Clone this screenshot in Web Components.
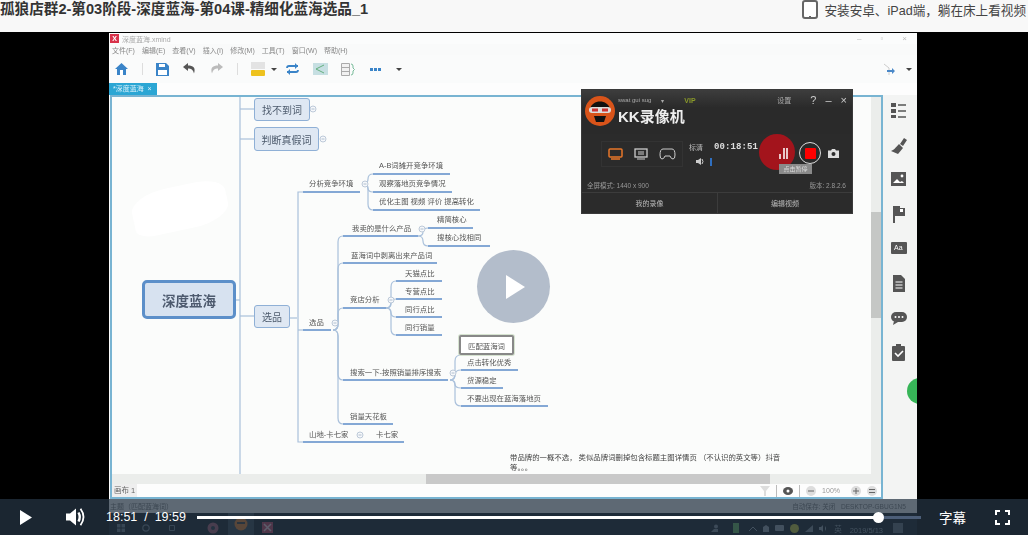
<!DOCTYPE html>
<html lang="zh">
<head>
<meta charset="utf-8">
<title>深度蓝海</title>
<style>
html, body { margin: 0; height: 100%; overflow: hidden; background: #000; }
body { font-family: "Liberation Sans", "Noto Sans CJK SC", sans-serif; }
</style>
</head>
<body>
<lesson-page>
  <lesson-header slot="header" title="孤狼店群2-第03阶段-深度蓝海-第04课-精细化蓝海选品_1" promo="安装安卓、iPad端，躺在床上看视频"></lesson-header>
  <video-player>
    <xmind-window>
      <mind-map></mind-map>
      <kk-recorder slot="overlay"></kk-recorder>
    </xmind-window>
    <player-controls slot="controls" current="18:51" total="19:59"></player-controls>
  </video-player>
</lesson-page>

<script>
const CJK = `"Liberation Sans", "Noto Sans CJK SC", sans-serif`;

// Page shell
class LessonPage extends HTMLElement {
  constructor() {
    super();
    this.attachShadow({ mode: "open" }).innerHTML = `
      <style>
      :host { display: flex; flex-direction: column; width: 1028px; height: 535px; overflow: hidden; }
      </style>
      <slot name="header"></slot>
      <slot></slot>`;
  }
}

// Top strip with course title and app promo
class LessonHeader extends HTMLElement {
  constructor() {
    super();
    this.attachShadow({ mode: "open" }).innerHTML = `
      <style>
      :host { display: flex; justify-content: space-between; height: 32px; flex: none; background: #f8f8f8; font-family: ${CJK}; }
      h1 { margin: -1px 0 0; font-size: 14.6px; line-height: 20px; font-weight: 700; color: #333; white-space: nowrap; }
      div { display: flex; align-items: center; gap: 6px; height: 19px; font-size: 12.6px; color: #444; padding-right: 2px; white-space: nowrap; }
      svg { display: block; }
      </style>
      <h1></h1>
      <div>
        <svg width="16" height="19" viewBox="0 0 16 19"><rect x="1" y="1" width="14" height="17" rx="2" fill="#fff" stroke="#666" stroke-width="2"/><rect x="7" y="16" width="2" height="1" fill="#666"/></svg>
        <span></span>
      </div>`;
  }
  connectedCallback() {
    this.shadowRoot.querySelector("h1").textContent = this.getAttribute("title");
    this.removeAttribute("title");
    this.shadowRoot.querySelector("span").textContent = this.getAttribute("promo");
  }
}

// Black stage holding the video frame, big play button and the control bar
class VideoPlayer extends HTMLElement {
  constructor() {
    super();
    this.attachShadow({ mode: "open" }).innerHTML = `
      <style>
      :host { display: block; position: relative; flex: 1; min-height: 0; background: #000; overflow: hidden; }
      .stage { box-sizing: border-box; height: 100%; padding: 1px 0 0 109px; }
      .play { position: absolute; left: 477px; top: 218px; width: 73px; height: 73px; border-radius: 50%; background: #b3bdcb; display: flex; align-items: center; justify-content: center; }
      .play svg { display: block; margin-left: 3px; }
      </style>
      <div class="stage"><slot></slot></div>
      <div class="play"><svg width="19" height="24" viewBox="0 0 19 24"><path d="M0 0L19 12L0 24Z" fill="#fff"/></svg></div>
      <slot name="controls"></slot>`;
  }
}

// Bottom control bar, translucent over the video
class PlayerControls extends HTMLElement {
  constructor() {
    super();
    this.attachShadow({ mode: "open" }).innerHTML = `
      <style>
      :host { position: absolute; left: 0; right: 0; bottom: 0; height: 36px; display: flex; align-items: center; background: rgba(38,53,68,.72); color: #fff; font-family: ${CJK}; font-size: 12.5px; }
      svg { display: block; flex: none; }
      .play { margin-left: 20px; }
      .vol { margin-left: 34px; }
      .time { margin-left: 21px; width: 91px; flex: none; white-space: pre; }
      .track { position: relative; width: 724px; height: 3px; background: #4c5e78; flex: none; }
      .done { width: 682px; height: 3px; background: #fff; }
      .knob { position: absolute; left: 676px; top: -4px; width: 11px; height: 11px; border-radius: 50%; background: #fff; }
      .cc { margin-left: 18px; width: 27px; flex: none; white-space: nowrap; font-size: 13.5px; }
      .full { margin-left: 29px; }
      </style>
      <svg class="play" width="12" height="15" viewBox="0 0 12 15"><path d="M0 0L12 7.5L0 15Z" fill="#fff"/></svg>
      <svg class="vol" width="19" height="18" viewBox="0 0 19 18"><path d="M0 5.5H4L10 .5V17.5L4 12.5H0Z" fill="#fff"/><path d="M12.5 4.5Q15 9 12.5 13.5" fill="none" stroke="#fff" stroke-width="2.4"/><path d="M14.5 .8Q20.5 9 14.5 17.2" fill="none" stroke="#fff" stroke-width="1.8"/></svg>
      <span class="time"></span>
      <div class="track"><div class="done"></div><div class="knob"></div></div>
      <span class="cc">字幕</span>
      <svg class="full" width="15" height="15" viewBox="0 0 15 15"><path d="M1 5V1H5M10 1H14V5M14 10V14H10M5 14H1V10" fill="none" stroke="#fff" stroke-width="2"/></svg>`;
  }
  connectedCallback() {
    this.shadowRoot.querySelector(".time").textContent = `${this.getAttribute("current")}  /  ${this.getAttribute("total")}`;
  }
}

// The recorded XMind desktop: chrome around a slotted map
class XmindWindow extends HTMLElement {
  constructor() {
    super();
    const side = [
      `<path d="M1 2h5v4H1zM1 8h5v4H1zM1 14h5v3H1z" fill="#555"/><path d="M8 4h8M8 10h8M8 16h8" stroke="#555" stroke-width="1.5"/>`,
      `<path d="M10 8l4-6 3 2-4 6zM9 8l4 4-5 6-7-3c3-1 4-3 8-7z" fill="#555"/>`,
      `<rect x="1" y="2" width="15" height="14" fill="#555"/><path d="M3 13l4-4 3 3 2-1 2 2z" fill="#fff"/><circle cx="12" cy="6" r="1.4" fill="#fff"/>`,
      `<path d="M3 1v17h2v-7h10V3h-5V1z" fill="#555"/><rect x="10" y="4" width="3" height="3" fill="#fff"/>`,
      `<rect x="1" y="3" width="16" height="12" rx="1" fill="#555"/><text x="4" y="11" font-size="7" fill="#fff" font-family="Liberation Sans">Aa</text>`,
      `<path d="M3 1h8l4 4v13H3z" fill="#555"/><path d="M5.5 8h7M5.5 11h7M5.5 14h7" stroke="#fff"/>`,
      `<rect x="1" y="4" width="16" height="10" rx="5" fill="#555"/><path d="M4 13l-1 4 5-3z" fill="#555"/><circle cx="5.5" cy="9" r="1" fill="#fff"/><circle cx="9" cy="9" r="1" fill="#fff"/><circle cx="12.5" cy="9" r="1" fill="#fff"/>`,
      `<rect x="2" y="3" width="13" height="15" rx="1" fill="#555"/><rect x="6" y="1" width="5" height="4" fill="#555"/><path d="M5 10l3 3 5-5" fill="none" stroke="#fff" stroke-width="1.6"/>`
    ].map(p => `<svg width="18" height="19" viewBox="0 0 18 19">${p}</svg>`).join("");
    const menu = ["文件(F)", "编辑(E)", "查看(V)", "插入(I)", "修改(M)", "工具(T)", "窗口(W)", "帮助(H)"]
      .map(m => `<span>${m}</span>`).join("");
    this.attachShadow({ mode: "open" }).innerHTML = `
      <style>
      :host { display: flex; position: relative; flex-direction: column; width: 808px; height: 502px; background: #fdfdfd; color: #777; font-family: ${CJK}; font-size: 7px; filter: blur(.65px); overflow: hidden; }
      svg { display: block; flex: none; }
      .title { flex: none; height: 11px; display: flex; align-items: center; padding-left: 1px; gap: 3px; color: #aaa; background: #fbfcfc; }
      .logo { width: 9px; height: 9px; background: #d8324a; color: #fff; line-height: 9px; text-align: center; font-size: 7px; font-weight: 700; }
      .winbtns { margin-left: auto; display: flex; gap: 19px; padding-right: 10px; color: #bbb; font-size: 8px; }
      .menu { flex: none; height: 11px; display: flex; align-items: center; gap: 7px; padding-left: 3px; color: #888; background: #f9fafa; }
      .tools { flex: none; height: 28px; display: flex; align-items: center; padding-left: 4px; background: #fafbfb; }
      .sep { width: 1px; height: 12px; background: #ddd; flex: none; }
      .caret { width: 0; height: 0; border: 3px solid transparent; border-top: 3px solid #444; border-bottom: 0; flex: none; }
      .tabbar { flex: none; height: 12px; background: #fdfdfd; }
      .tab { box-sizing: border-box; width: 48px; height: 12px; padding-left: 4px; background: #2ba6d4; color: #d8f0fa; line-height: 12px; white-space: nowrap; }
      .body { flex: 1; min-height: 0; height: 404px; display: flex; padding-left: 1px; }
      .frame { box-sizing: border-box; width: 773px; display: flex; flex-direction: column; border: 2px solid #78b4d2; background: #fff; }
      .area { flex: 1; min-height: 0; display: flex; }
      .area ::slotted(mind-map) { flex: 1; min-width: 0; }
      .vbar { flex: none; width: 10px; background: #ebedeb; position: relative; }
      .vthumb { margin-top: 115px; height: 106px; background: #c5c7c5; }
      .hbar { flex: none; height: 10px; background: #ebedeb; padding-left: 314px; }
      .hthumb { width: 344px; height: 10px; background: #c9c9c9; }
      .bottom { flex: none; height: 13px; display: flex; align-items: center; background: #fdfdfd; color: #666; }
      .sheet { padding: 0 2px; background: #eee; height: 13px; line-height: 13px; font-size: 7.5px; }
      .zoom { margin-left: auto; display: flex; align-items: center; gap: 6px; padding-right: 4px; color: #999; }
      .side { flex: 1; display: flex; flex-direction: column; align-items: center; gap: 15.5px; padding-top: 6px; padding-right: 2px; background: #f3f4f3; position: relative; overflow: hidden; }
      .green { position: absolute; left: 24px; top: 283px; width: 26px; height: 26px; border-radius: 50%; background: #37b558; }
      .status { flex: none; height: 14px; display: flex; justify-content: space-between; align-items: center; padding: 0 11px 0 1px; background: #f0f0f0; color: #777; }
      .status span:last-child { font-size: 6.6px; }
      .task { flex: none; height: 22px; display: flex; align-items: center; background: #0c1319; color: #8a96a0; position: relative; }
      .task svg { margin-top: 8px; }
      .tray { margin-left: auto; display: flex; align-items: center; gap: 6px; margin-top: 8px; }
      .tray svg { margin-top: 0; }
      .date { margin-left: 8px; margin-top: 12px; font-size: 7.5px; color: #8d98a2; white-space: nowrap; }
      .note { margin: 8px 14px 0 10px; width: 10px; height: 10px; background: #5c6770; }
      ::slotted(kk-recorder) { position: absolute; left: 473px; top: 57px; }
      </style>
      <div class="title"><span class="logo">X</span><span>深度蓝海.xmind</span><div class="winbtns"><span>–</span><span>▫</span><span>×</span></div></div>
      <div class="menu">${menu}</div>
      <div class="tools">
        <svg width="15" height="14" viewBox="0 0 15 14" style="margin-left:1px"><path d="M7.5 1L1 7h2v6h9V7h2z" fill="#3a84c8"/><rect x="6" y="8" width="3" height="5" fill="#fff"/></svg>
        <div class="sep" style="margin-left:13px"></div>
        <svg width="13" height="13" viewBox="0 0 13 13" style="margin-left:13px"><path d="M0 0h10l3 3v10H0z" fill="#3a84c8"/><rect x="3" y="1" width="6" height="3" fill="#fff"/><rect x="2" y="7" width="9" height="5" fill="#fff"/></svg>
        <svg width="13" height="12" viewBox="0 0 13 12" style="margin-left:14px"><path d="M5 0L0 4l5 4V5.5c3 0 5 1 6 5 2-6-1-8-6-8z" fill="#555"/></svg>
        <svg width="13" height="12" viewBox="0 0 13 12" style="margin-left:14px"><path d="M8 0l5 4-5 4V5.5c-3 0-5 1-6 5-2-6 1-8 6-8z" fill="#bbb"/></svg>
        <div class="sep" style="margin-left:14px"></div>
        <svg width="14" height="14" viewBox="0 0 14 14" style="margin-left:13px"><rect width="14" height="7" y="0" fill="#e3e3e3"/><rect width="14" height="6" y="8" rx="1" fill="#eec21e"/></svg>
        <div class="caret" style="margin-left:6px"></div>
        <svg width="13" height="12" viewBox="0 0 13 12" style="margin-left:9px"><path d="M12 3H3Q1 3 1 5M1 9h9q2 0 2-2" fill="none" stroke="#3a84c8" stroke-width="1.8"/><path d="M9 0l3 3-3 3zM4 6L1 9l3 3z" fill="#3a84c8"/></svg>
        <svg width="15" height="12" viewBox="0 0 15 12" style="margin-left:14px"><rect width="15" height="12" fill="#c6dfe2"/><path d="M3 6l8-4M3 6l8 4" stroke="#65b07e"/></svg>
        <svg width="14" height="13" viewBox="0 0 14 13" style="margin-left:13px"><path d="M.5.5h8v12h-8zM.5 4.5h8M.5 8.5h8" fill="#f1f1f1" stroke="#aaa"/><path d="M10 1q2 0 2 2v2l1.5 1.5L12 8v2q0 2-2 2" fill="none" stroke="#7b9"/></svg>
        <svg width="11" height="3" viewBox="0 0 11 3" style="margin-left:15px"><path d="M0 0h3v3H0zM4 0h3v3H4zM8 0h3v3H8z" fill="#3a84c8"/></svg>
        <div class="caret" style="margin-left:15px"></div>
        <svg width="12" height="13" viewBox="0 0 12 13" style="margin-left:481px"><path d="M1 1l5 4v7" fill="none" stroke="#ccc"/><path d="M4 7h5V5l3 3-3 3V9H4z" fill="#4a88c8"/></svg>
        <div class="caret" style="margin-left:11px"></div>
      </div>
      <div class="tabbar"><div class="tab">*深度蓝海&nbsp; ×</div></div>
      <div class="body">
        <div class="frame">
          <div class="area"><slot></slot><div class="vbar"><div class="vthumb"></div></div></div>
          <div class="hbar"><div class="hthumb"></div></div>
          <div class="bottom">
            <span class="sheet">画布 1</span>
            <div class="zoom">
              <svg width="10" height="10" viewBox="0 0 10 10"><path d="M0 0h10L6 5v5H4V5z" fill="#ddd"/></svg>
              <div class="sep" style="background:#bbb"></div>
              <svg width="10" height="8" viewBox="0 0 10 8"><ellipse cx="5" cy="4" rx="5" ry="4" fill="#555"/><circle cx="5" cy="4" r="1.5" fill="#fff"/></svg>
              <div class="sep" style="background:#bbb"></div>
              <svg width="10" height="10" viewBox="0 0 10 10"><circle cx="5" cy="5" r="5" fill="#ddd"/><path d="M2 5h6" stroke="#666"/></svg>
              <span>100%</span>
              <svg width="10" height="10" viewBox="0 0 10 10" style="margin-left:5px"><circle cx="5" cy="5" r="5" fill="#ddd"/><path d="M2 5h6M5 2v6" stroke="#666"/></svg>
              <svg width="10" height="10" viewBox="0 0 10 10"><circle cx="5" cy="5" r="5" fill="#ddd"/><path d="M2 3.5h6M2 6.5h6" stroke="#666"/></svg>
            </div>
          </div>
        </div>
        <div class="side">${side}<div class="green"></div></div>
      </div>
      <div class="status"><span>主题（匹配蓝海词）</span><span>自动保存: 关闭 &nbsp; DESKTOP-GBUG1N5</span></div>
      <div class="task">
        <svg width="8" height="8" viewBox="0 0 8 8" style="margin-left:8px"><path d="M0 0h3.5v3.5H0zM4.5 0H8v3.5H4.5zM0 4.5h3.5V8H0zM4.5 4.5H8V8H4.5z" fill="#66737e"/></svg>
        <svg width="8" height="8" viewBox="0 0 8 8" style="margin-left:17px"><circle cx="4" cy="4" r="3.2" fill="none" stroke="#66737e" stroke-width="1.2"/></svg>
        <svg width="8" height="8" viewBox="0 0 8 8" style="margin-left:18px"><path d="M1.5 1.500h5v5h-5z" fill="none" stroke="#66737e"/></svg>
        <svg width="12" height="12" viewBox="0 0 12 12" style="margin-left:31px;margin-top:7px"><circle cx="6" cy="6" r="5.5" fill="#a0526a"/><circle cx="6" cy="6" r="2" fill="#1f2c38"/></svg>
        <svg width="26" height="22" viewBox="0 0 26 22" style="margin-left:9px;margin-top:0"><rect width="26" height="22" fill="#2e3a45"/><circle cx="13" cy="11" r="6.5" fill="#d9741f"/><rect x="9" y="9" width="8" height="2" fill="#333"/></svg>
        <svg width="11" height="11" viewBox="0 0 11 11" style="margin-left:8px;margin-top:7px"><rect width="11" height="11" fill="#b83a58"/><path d="M2 2l7 7M9 2L2 9" stroke="#e8c8d0" stroke-width="1.5"/></svg>
        <div class="tray">
          <svg width="8" height="8" viewBox="0 0 8 8"><circle cx="5" cy="2.5" r="2" fill="#77838d"/><path d="M0 8l3-3h4v3z" fill="#77838d"/></svg>
          <svg width="6" height="10" viewBox="0 0 6 10" style="margin-left:8px"><rect width="6" height="10" fill="#5fae52"/></svg>
          <svg width="8" height="5" viewBox="0 0 8 5" style="margin-left:4px"><path d="M0 5l4-4 4 4" fill="none" stroke="#8b96a0"/></svg>
          <svg width="6" height="7" viewBox="0 0 6 7"><path d="M0 7V2l3-2 3 2v5z" fill="#8b96a0"/></svg>
          <svg width="9" height="6" viewBox="0 0 9 6"><rect width="9" height="6" rx="1" fill="#8b96a0"/></svg>
          <svg width="9" height="9" viewBox="0 0 9 9"><circle cx="4.5" cy="4.5" r="4.5" fill="#c0c030"/></svg>
          <svg width="8" height="7" viewBox="0 0 8 7"><path d="M0 7L8 0v7z" fill="#77838d"/></svg>
          <svg width="9" height="7" viewBox="0 0 9 7"><path d="M0 2h2l2-2v7L2 5H0zM6 1q2 2.500 0 5" fill="#8b96a0"/></svg>
          <span style="font-size:7.5px;color:#8b96a0">英</span>
        </div>
        <span class="date">2019/5/13</span>
        <div class="note"></div>
      </div>
      <slot name="overlay"></slot>`;
  }
}

// Mind map: a free canvas, nodes are placed by their own coordinates (page px)
const OX = 112, OY = 97;
const MAP_BOXES = [
  ["找不到词", 254, 98, 56, 23, 10],
  ["判断真假词", 254, 127, 65, 24, 10],
  ["选品", 254, 305, 36, 23, 10]
];
const MAP_TOPICS = [
  ["分析竞争环境", 309, 184, 303, 360, 192],
  ["A-B词摊开竞争环境", 379, 166, 373, 450, 174],
  ["观察落地页竞争情况", 379, 184, 373, 452, 192],
  ["优化主图 视频 评价 提高转化", 379, 202, 373, 480, 210],
  ["我卖的是什么产品", 352, 229, 343, 418, 236],
  ["精简核心", 437, 220, 428, 473, 228],
  ["搜核心找相同", 437, 238, 428, 490, 246],
  ["蓝海词中剥离出来产品词", 351, 256, 343, 437, 263],
  ["天猫点比", 405, 274, 396, 442, 281],
  ["专营点比", 405, 292, 396, 442, 299],
  ["同行点比", 405, 310, 396, 442, 317],
  ["同行销量", 405, 328, 396, 442, 335],
  ["竞店分析", 350, 300, 343, 386, 308],
  ["选品", 309, 323, 303, 331, 330],
  ["搜索一下-按照销量排序搜索", 350, 373, 343, 448, 380],
  ["点击转化优秀", 467, 363, 461, 518, 370],
  ["货源稳定", 467, 381, 461, 503, 388],
  ["不要出现在蓝海落地页", 467, 399, 461, 548, 406],
  ["销量天花板", 350, 417, 343, 393, 424],
  ["山地-卡七家", 309, 435, 303, 356, 442],
  ["卡七家", 376, 435, 370, 404, 442]
];
const MAP_MARKS = [[313, 109], [323, 139], [365, 184], [422, 229], [391, 300], [335, 323], [453, 373], [360, 435]];
// branch curves, page coords: [x of trunk, y where branch leaves, child ys, child x]
const MAP_BRANCHES = [
  [368, 184, [174, 192, 210], 373],
  [423, 236, [228, 246], 428],
  [391, 308, [281, 299, 317, 335], 396],
  [455, 380, [355, 370, 388, 406], 461],
  [338, 330, [236, 263, 308, 380, 424], 343]
];

class MindMap extends HTMLElement {
  constructor() {
    super();
    const x = v => v - OX, y = v => v - OY;
    let lines = "";
    const L = (d, c = "#a9c0db", w = 1.2) => { lines += `<path d="${d}" fill="none" stroke="${c}" stroke-width="${w}"/>`; };

    // trunks out of the central topic
    L(`M${x(240)} 0V${y(475)}`);
    L(`M${x(235)} ${y(300)}H${x(240)}`);
    [109, 139, 316].forEach(v => L(`M${x(240)} ${y(v)}H${x(254)}`));
    L(`M${x(290)} ${y(318)}H${x(297)}`);
    L(`M${x(303)} ${y(192)}H${x(298)}V${y(442)}H${x(303)}`);
    L(`M${x(298)} ${y(330)}H${x(303)}`);
    L(`M${x(356)} ${y(442)}H${x(370)}`, "#5d8cc8", 1.5);

    // curved branches
    MAP_BRANCHES.forEach(([tx, from, ys, cx]) => {
      ys.forEach(cy => {
        const r = Math.min(6, Math.abs(cy - from) / 2);
        const s = cy < from ? -1 : 1;
        L(`M${x(tx - 5)} ${y(from)}Q${x(tx)} ${y(from)} ${x(tx)} ${y(from + s * r)}V${y(cy - s * r)}Q${x(tx)} ${y(cy)} ${x(cx)} ${y(cy)}`);
      });
    });

    // underlines under each topic
    MAP_TOPICS.forEach(t => L(`M${x(t[3])} ${y(t[5])}H${x(t[4])}`, "#5d8cc8", 1.5));

    const marks = MAP_MARKS.map(([mx, my]) =>
      `<circle cx="${x(mx)}" cy="${y(my)}" r="3" fill="#f6f8fb" stroke="#bcc9d8"/><path d="M${x(mx) - 1.5} ${y(my)}h3" stroke="#9fb0c4" stroke-width=".8"/>`).join("");

    const pos = (l, t) => `left:${x(l)}px;top:${y(t)}px`;
    const boxes = MAP_BOXES.map(([txt, l, t, w, h, f]) =>
      `<div class="box" style="${pos(l, t)};width:${w}px;height:${h}px;font-size:${f}px">${txt}</div>`).join("");
    const topics = MAP_TOPICS.map(t =>
      `<span class="topic" style="${pos(t[1], t[2] - 6)}">${t[0]}</span>`).join("");

    this.attachShadow({ mode: "open" }).innerHTML = `
      <style>
      :host { display: block; position: relative; overflow: hidden; background: #fbfcfb; font-family: ${CJK}; }
      svg { position: absolute; left: 0; top: 0; }
      .blob { position: absolute; width: 96px; height: 44px; border-radius: 40% 30% 40% 20%; background: #fff; transform: rotate(-12deg); }
      .box { position: absolute; box-sizing: border-box; display: flex; align-items: center; justify-content: center; border: 1.5px solid #8fb0d6; border-radius: 3px; background: #dfe8f3; color: #4c5a6c; }
      .main { position: absolute; box-sizing: border-box; display: flex; align-items: center; justify-content: center; border: 3px solid #5c8fc9; border-radius: 5px; background: #d7e2f0; color: #4d5a6e; font-size: 13.5px; font-weight: 700; }
      .topic { position: absolute; font-size: 7.4px; line-height: 12px; color: #555; white-space: nowrap; }
      .pick { position: absolute; box-sizing: border-box; display: flex; align-items: center; justify-content: center; border: 2px solid #888; border-radius: 2px; background: #fff; color: #555; font-size: 7.4px; box-shadow: 0 0 0 1px #d6e3d0; }
      .note { position: absolute; width: 272px; font-size: 7.4px; line-height: 10px; color: #444; }
      </style>
      <div class="blob" style="${pos(132, 186)}"></div>
      <svg width="770" height="377">${lines}${marks}</svg>
      <div class="main" style="${pos(142, 280)};width:94px;height:39px">深度蓝海</div>
      ${boxes}${topics}
      <div class="pick" style="${pos(459, 335)};width:55px;height:20px">匹配蓝海词</div>
      <div class="note" style="${pos(510, 453)}">带品牌的一概不选， 类似品牌词删掉包含标题主图详情页 （不认识的英文等）抖音等。。。</div>`;
  }
}

// Floating screen-recorder window, another window on the recorded desktop
class KkRecorder extends HTMLElement {
  constructor() {
    super();
    this.attachShadow({ mode: "open" }).innerHTML = `
      <style>
      :host { display: flex; flex-direction: column; width: 270px; height: 123px; background: #2b2b2b; color: #bbb; font-family: ${CJK}; font-size: 7px; overflow: hidden; box-shadow: 0 0 0 1px #3a3a3a; }
      svg { display: block; flex: none; }
      .top { flex: none; height: 44px; display: flex; position: relative; background: linear-gradient(#3d3d3d, #2a2a2a 40%); }
      .badge { margin: 5px 0 0 3px; }
      .who { margin-left: 3px; display: flex; flex-direction: column; }
      .user { height: 14px; display: flex; align-items: center; gap: 10px; padding-top: 3px; font-size: 6px; color: #aaa; }
      .vip { color: #8a9a2a; font-weight: 700; margin-left: 10px; font-size: 7px; }
      .name { color: #eee; font-size: 15px; font-weight: 700; line-height: 18px; white-space: nowrap; margin-top: 1px; }
      .wbtn { margin-left: auto; display: flex; gap: 9px; height: 18px; align-items: center; padding: 1px 5px 0 0; color: #ccc; font-size: 11px; }
      .wbtn small { font-size: 7px; margin-right: 10px; color: #aaa; }
      .mid { flex: none; height: 45px; position: relative; display: flex; align-items: center; padding-bottom: 6px; box-sizing: border-box; }
      .modes { margin-left: 19px; width: 82px; height: 26px; display: flex; align-items: center; justify-content: space-around; border: 1px solid #333; box-sizing: border-box; }
      .info { margin-left: 6px; display: flex; flex-direction: column; gap: 6px; }
      .clock { display: flex; align-items: center; gap: 11px; }
      .clock b { font: 700 9px "Liberation Mono", monospace; color: #ddd; letter-spacing: .1px; }
      .vol { display: flex; align-items: center; gap: 5px; margin-left: 7px; }
      .bar { width: 2px; height: 8px; background: #2f6fc0; }
      .flash { position: absolute; left: 177px; top: 0; width: 36px; height: 36px; border-radius: 50%; background: #a3141c; }
      .pause { position: absolute; left: 196px; top: 14px; }
      .rec { position: absolute; left: 217px; top: 8px; width: 22px; height: 22px; box-sizing: border-box; border: 1.5px solid #ddd; border-radius: 50%; display: flex; align-items: center; justify-content: center; }
      .rec i { width: 11px; height: 11px; background: #f00; border-radius: 1px; }
      .cam { position: absolute; left: 246px; top: 15px; }
      .tip { position: absolute; left: 197px; top: 30px; width: 33px; height: 10px; background: #8a8a8a; color: #ddd; font-size: 6px; line-height: 10px; text-align: center; }
      .line { flex: none; height: 13px; display: flex; justify-content: space-between; align-items: center; padding: 0 6px 2px 5px; box-sizing: border-box; color: #999; font-size: 6.5px; }
      .btns { flex: 1; display: flex; border-top: 1px solid #3c3c3c; }
      .btns span { display: flex; align-items: center; justify-content: center; }
      .btns span:first-child { width: 135px; border-right: 1px solid #3c3c3c; }
      .btns span:last-child { flex: 1; }
      </style>
      <div class="top">
        <svg class="badge" width="30" height="30" viewBox="0 0 30 30" style="margin-top:6px"><circle cx="15" cy="15" r="15" fill="#d9541a"/><path d="M5 13C7 3 23 3 25 13z" fill="#111"/><rect x="4" y="11" width="22" height="6" rx="3" fill="#ddd"/><rect x="7" y="12.5" width="6" height="3" fill="#c33"/><rect x="17" y="12.5" width="6" height="3" fill="#c33"/><path d="M9 20h12l-2 6h-8z" fill="#111"/></svg>
        <div class="who">
          <div class="user"><span>swat gui sug</span><span>▾</span><span class="vip">VIP</span></div>
          <div class="name">KK录像机</div>
        </div>
        <div class="wbtn"><small>设置</small><span>?</span><span>–</span><span>×</span></div>
      </div>
      <div class="mid">
        <div class="modes">
          <svg width="15" height="12" viewBox="0 0 15 12"><rect x="1" y="1" width="13" height="8" rx="1" fill="none" stroke="#e8772a" stroke-width="1.5"/><path d="M3 11h9" stroke="#e8772a" stroke-width="1.5"/></svg>
          <svg width="14" height="12" viewBox="0 0 14 12"><rect x="1" y="1" width="12" height="8" fill="none" stroke="#ccc" stroke-width="1.3"/><path d="M4 4h6M4 6h6M3 11h8" stroke="#ccc"/></svg>
          <svg width="17" height="12" viewBox="0 0 17 12"><path d="M4 1h9q3 0 3 6 0 4-2 4-2 0-3-3H6q-1 3-3 3-2 0-2-4 0-6 3-6z" fill="none" stroke="#ccc"/></svg>
        </div>
        <div class="info">
          <div class="clock"><span>标清</span><b>00:18:51</b></div>
          <div class="vol"><svg width="9" height="7" viewBox="0 0 9 7"><path d="M0 2h2l3-2v7L2 5H0z" fill="#ccc"/><path d="M6 1q2 2.5 0 5" stroke="#ccc" fill="none"/></svg><div class="bar"></div></div>
        </div>
        <div class="flash"></div>
        <svg class="pause" width="10" height="11" viewBox="0 0 10 11"><path d="M1 6h2v5H1zM5 0h2v11H5zM8 0h2v11H8z" fill="#e9c7c9"/></svg>
        <div class="rec"><i></i></div>
        <svg class="cam" width="11" height="9" viewBox="0 0 11 9"><path d="M0 1.5h3L4 0h3l1 1.5h3V9H0z" fill="#ddd"/><circle cx="5.5" cy="5" r="2" fill="#2b2b2b"/></svg>
        <div class="tip">点击暂停</div>
      </div>
      <div class="line"><span>全屏模式: 1440 x 900</span><span>版本: 2.8.2.6</span></div>
      <div class="btns"><span>我的录像</span><span>编辑视频</span></div>`;
  }
}

customElements.define("lesson-page", LessonPage);
customElements.define("lesson-header", LessonHeader);
customElements.define("video-player", VideoPlayer);
customElements.define("player-controls", PlayerControls);
customElements.define("xmind-window", XmindWindow);
customElements.define("mind-map", MindMap);
customElements.define("kk-recorder", KkRecorder);
</script>
</body>
</html>
